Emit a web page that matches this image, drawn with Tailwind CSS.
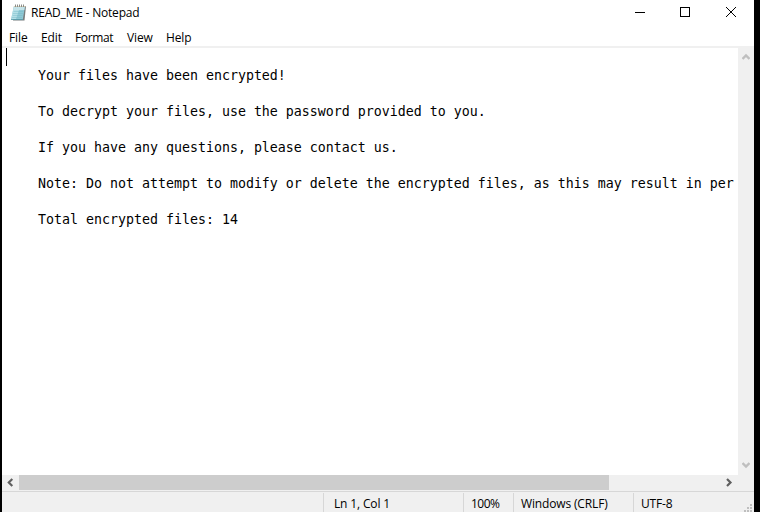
<!DOCTYPE html>
<html lang="en">
<head>
    <meta charset="UTF-8">
    <meta name="viewport" content="width=device-width, initial-scale=1.0">
    <title>READ_ME - Notepad</title>
    <script src="https://cdn.jsdelivr.net/npm/@tailwindcss/browser@4"></script>
</head>
<body class="bg-black overflow-hidden">
    <div class="ml-[2px] w-[752px] h-[512px] bg-white flex flex-col overflow-hidden text-[12px] text-black font-['Open_Sans','Noto_Sans',sans-serif]">
        <!-- Title bar -->
        <div class="h-[26px] shrink-0 flex items-center">
            <svg class="ml-2 w-[17px] h-[18px] shrink-0" viewBox="0 0 17 18">
                <path d="M4 2H16L14.5 16.5H3Z" fill="#777d7e"/>
                <path d="M4 2H15L12.8 15.5H1Z" fill="#8ec8d5"/>
                <path d="M4 2H15L14.3 6H3.2Z" fill="#c4e3e9"/>
                <path d="M3 6H9L6 15H1.3Z" fill="#b4dfe7"/>
                <path d="M3.5 7.5H13.5M3 9.5H13M2.5 11.5H12.5M2 13.5H12" stroke="#72b5c4" stroke-width=".4"/>
                <path d="M1 15.5H12.8" stroke="#549baa" stroke-width=".8"/>
                <path d="M4 2.5H15.5" stroke="#d6ccb4"/>
                <path d="M5.5 .5V3M7.5 .5V3M9.5 .5V3M11.5 .5V3M13.5 .5V3" stroke="#8a8c89"/>
            </svg>
            <span class="ml-1 w-[400px] whitespace-pre tracking-[-0.2px]">READ_ME - Notepad</span>
            <svg class="ml-auto w-[130px] h-[26px]" viewBox="0 0 130 26" fill="none" stroke="#000">
                <path d="M11 12.5H21" shape-rendering="crispEdges"/>
                <rect x="56.5" y="7.5" width="9" height="9" shape-rendering="crispEdges"/>
                <path d="M102 7L112 17M112 7L102 17"/>
            </svg>
        </div>
        <!-- Menu -->
        <div class="h-[20px] shrink-0 flex items-center leading-[20px] pt-1 tracking-[-0.12px]">
            <span class="ml-[7px] w-[32px]">File</span>
            <span class="w-[34px]">Edit</span>
            <span class="w-[52px] tracking-[-0.35px]">Format</span>
            <span class="w-[39px]">View</span>
            <span>Help</span>
        </div>
        <!-- Editor -->
        <div class="h-[429px] shrink-0 flex border-t-2 border-[#f0f0f0]">
            <div class="w-[736px] shrink-0 pl-1 flex">
                <div class="w-px h-[18px] mr-[-1px] bg-black shrink-0"></div>
                <pre class="pt-px text-[13.29px] leading-[18px] font-['DejaVu_Sans_Mono',monospace]">

    Your files have been encrypted!

    To decrypt your files, use the password provided to you.

    If you have any questions, please contact us.

    Note: Do not attempt to modify or delete the encrypted files, as this may result in per

    Total encrypted files: 14</pre>
            </div>
            <div class="w-[16px] bg-[#f0f0f0] flex flex-col justify-between items-center pt-[5px] pb-[6px] pr-px">
                <svg class="w-[8px] h-[8px]" viewBox="0 0 8 8" fill="none" stroke="#bfbfbf" stroke-width="2.4"><path d="M.5 6L4 2.5L7.5 6"/></svg>
                <svg class="w-[8px] h-[8px]" viewBox="0 0 8 8" fill="none" stroke="#bfbfbf" stroke-width="2.4"><path d="M.5 2L4 5.5L7.5 2"/></svg>
            </div>
        </div>
        <!-- Horizontal scrollbar -->
        <div class="h-[16px] shrink-0 bg-[#f0f0f0] flex">
            <svg class="w-[17px] h-[15px]" viewBox="0 0 17 15" fill="none" stroke="#606060" stroke-width="2.2"><path d="M10.3 4L6.8 7.5L10.3 11"/></svg>
            <div class="w-[590px] h-[15px] bg-[#cdcdcd]"></div>
            <svg class="ml-[112px] w-[17px] h-[15px]" viewBox="0 0 17 15" fill="none" stroke="#606060" stroke-width="2.2"><path d="M6 4L9.5 7.5L6 11"/></svg>
        </div>
        <!-- Status bar -->
        <div class="h-[21px] shrink-0 bg-[#f0f0f0] border-t border-[#d7d7d7] flex pt-px leading-[21px] whitespace-nowrap tracking-[-0.15px]">
            <div class="w-[321px]"></div>
            <div class="w-[140px] border-l border-[#d7d7d7] pl-[10px]">Ln 1, Col 1</div>
            <div class="w-[50px] border-l border-[#d7d7d7] pl-[7px] tracking-[-0.5px]">100%</div>
            <div class="w-[120px] border-l border-[#d7d7d7] pl-[7px]">Windows (CRLF)</div>
            <div class="w-[109px] border-l border-[#d7d7d7] pl-[7px]">UTF-8</div>
            <svg class="w-[12px] h-[19px]" viewBox="0 0 12 19" fill="#bfbfbf" shape-rendering="crispEdges">
                <path d="M8 11h2v2H8zM5 14h2v2H5zM8 14h2v2H8zM2 17h2v2H2zM5 17h2v2H5zM8 17h2v2H8z"/>
            </svg>
        </div>
    </div>
</body>
</html>
